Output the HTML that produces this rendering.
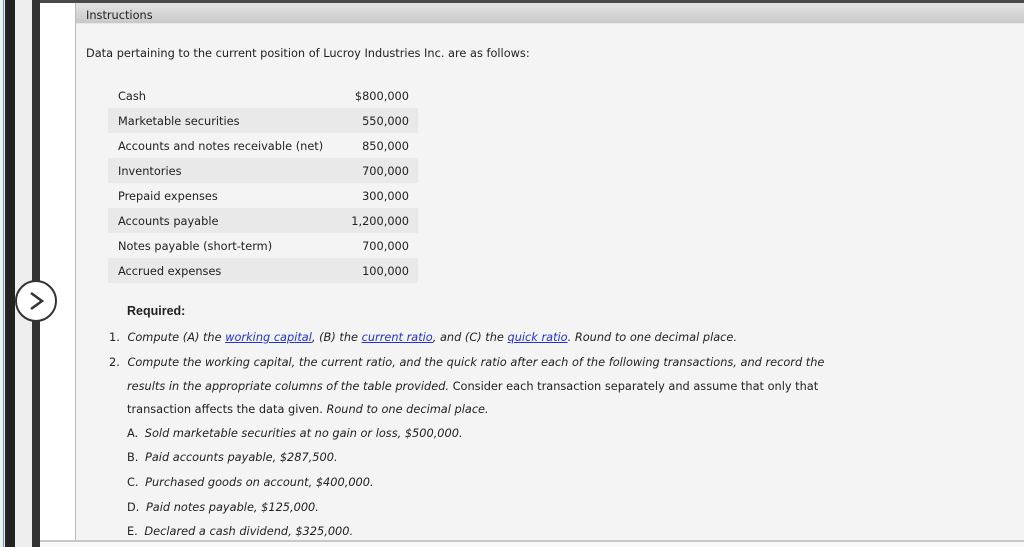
<!DOCTYPE html>
<html><head><meta charset="utf-8"><style>
*{margin:0;padding:0;box-sizing:border-box}
body{width:1024px;height:547px;overflow:hidden;background:#f4f4f4;font-family:"DejaVu Sans","Liberation Sans",sans-serif;font-size:11.35px;color:#222;position:relative}
.a{position:absolute;white-space:nowrap}
i{font-style:italic}
a{color:#2233cc;text-decoration:underline}
.row{position:absolute;left:108px;width:310px;height:25px}
.row span{position:absolute;top:6px}
.row .v{right:9px}
.row .l{left:10px}
.sh{background:#e9e9e9}
</style></head><body>
<div class="a" style="left:0;top:0;width:5px;height:547px;background:#f0f0f0"></div>
<div class="a" style="left:3px;top:0;width:1px;height:547px;background:#6b8ec4"></div>
<div class="a" style="left:5px;top:0;width:10px;height:547px;background:#222"></div>
<div class="a" style="left:15px;top:0;width:17px;height:547px;background:#eee"></div>
<div class="a" style="left:32px;top:0;width:8px;height:547px;background:#333"></div>
<div class="a" style="left:40px;top:0;width:35px;height:547px;background:#fff"></div>
<div class="a" style="left:75px;top:0;width:1px;height:540px;background:#bbb"></div>
<div class="a" style="left:40px;top:0;width:984px;height:3px;background:#4a4a4a"></div>
<div class="a" style="left:76px;top:3px;width:948px;height:21px;background:linear-gradient(#e4e4e4,#c8c8c8);border-bottom:1px solid #e8e8e8"></div>
<div class="a" style="left:86px;top:8px;color:#222">Instructions</div>
<div class="a" style="left:86px;top:46px">Data pertaining to the current position of Lucroy Industries Inc. are as follows:</div>

<div class="row" style="top:83px"><span class="l">Cash</span><span class="v">$800,000</span></div>
<div class="row sh" style="top:108px"><span class="l">Marketable securities</span><span class="v">550,000</span></div>
<div class="row" style="top:133px"><span class="l">Accounts and notes receivable (net)</span><span class="v">850,000</span></div>
<div class="row sh" style="top:158px"><span class="l">Inventories</span><span class="v">700,000</span></div>
<div class="row" style="top:183px"><span class="l">Prepaid expenses</span><span class="v">300,000</span></div>
<div class="row sh" style="top:208px"><span class="l">Accounts payable</span><span class="v">1,200,000</span></div>
<div class="row" style="top:233px"><span class="l">Notes payable (short-term)</span><span class="v">700,000</span></div>
<div class="row sh" style="top:258px"><span class="l">Accrued expenses</span><span class="v">100,000</span></div>

<div class="a" style="left:15px;top:280px;width:42px;height:42px;border-radius:50%;background:#fff;border:2px solid #333"></div>
<svg class="a" style="left:27px;top:290px" width="20" height="22" viewBox="0 0 20 22"><path d="M4 3 L15 11 L4 19" fill="none" stroke="#333" stroke-width="2.5"/></svg>

<div class="a" style="left:127px;top:304px;font-weight:bold;font-family:'Liberation Sans',sans-serif;font-size:12.5px">Required:</div>
<div class="a" style="left:109px;top:330px">1. <i style="margin-left:4px">Compute (A) the <a>working capital</a>, (B) the <a>current ratio</a>, and (C) the <a>quick ratio</a>. Round to one decimal place.</i></div>
<div class="a" style="left:109px;top:355px">2. <i style="margin-left:4px">Compute the working capital, the current ratio, and the quick ratio after each of the following transactions, and record the</i></div>
<div class="a" style="left:127px;top:379px"><i>results in the appropriate columns of the table provided.</i> Consider each transaction separately and assume that only that</div>
<div class="a" style="left:127px;top:402px">transaction affects the data given. <i>Round to one decimal place.</i></div>
<div class="a" style="left:127px;top:426px">A. <i style="margin-left:3px">Sold marketable securities at no gain or loss, $500,000.</i></div>
<div class="a" style="left:127px;top:450px">B. <i style="margin-left:3px">Paid accounts payable, $287,500.</i></div>
<div class="a" style="left:127px;top:475px">C. <i style="margin-left:3px">Purchased goods on account, $400,000.</i></div>
<div class="a" style="left:127px;top:500px">D. <i style="margin-left:3px">Paid notes payable, $125,000.</i></div>
<div class="a" style="left:127px;top:524px">E. <i style="margin-left:3px">Declared a cash dividend, $325,000.</i></div>
<div class="a" style="left:40px;top:540px;width:984px;height:7px;background:#f8f8f8;border-top:2px solid #c8c8c8"></div>
</body></html>
